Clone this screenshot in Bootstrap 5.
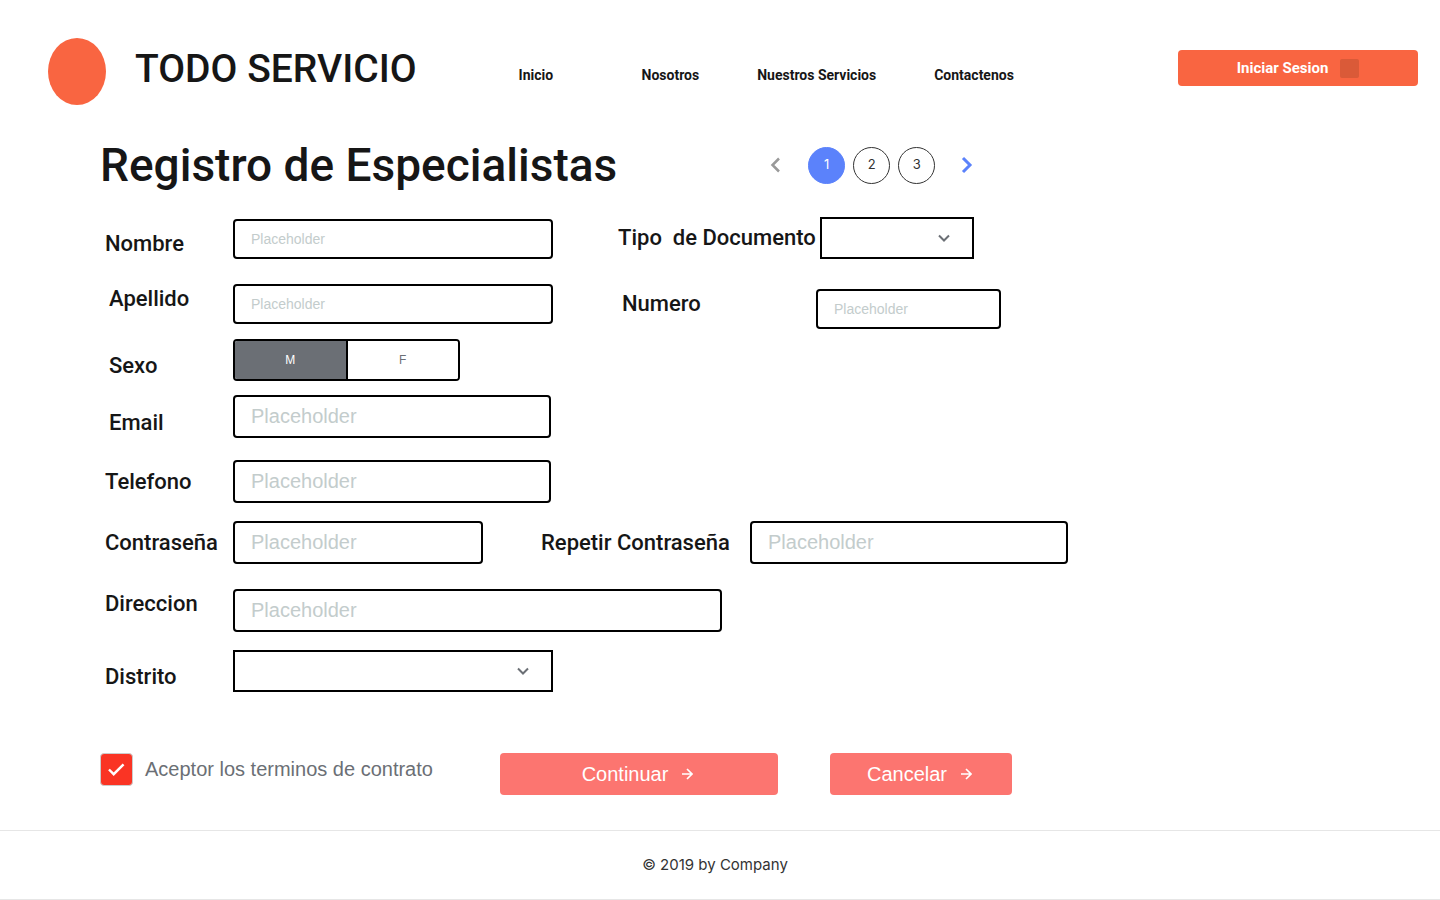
<!DOCTYPE html>
<html lang="es">
<head>
<meta charset="utf-8">
<meta name="viewport" content="width=device-width, initial-scale=1">
<title>Registro de Especialistas</title>
<link href="https://cdn.jsdelivr.net/npm/bootstrap@5.3.0/dist/css/bootstrap.min.css" rel="stylesheet">
<style>
  :root {
    --ink: #161616;
    --brand: #f96541;
    --action: #fc7570;
    --blue: #5b82fb;
    --grey: #6b6f75;
    --hint: #c3cccc;
  }
  body { font-family: Roboto, "Liberation Sans", sans-serif; color: var(--ink); background: #fff; }

  .site-header { min-height: 138px; padding: 4px 22px 0 48px; }
  .brand-name { font-size: 39px; font-weight: 500; line-height: 46px; margin-left: 29px; color: var(--ink); }
  .menu { margin-left: 102px; }
  .menu a { font-size: 14px; font-weight: 700; line-height: 20px; color: var(--ink); white-space: nowrap; text-decoration: none; }
  .menu li:first-child { width: 123px; }
  .menu li + li { margin-right: 58px; }
  .menu li:last-child { margin-right: 0; }
  .btn-login { width: 240px; height: 36px; margin-bottom: 6px; font-size: 15px; font-weight: 700; color: #fff; background: var(--brand); border: 0; border-radius: 4px; }
  .btn-login:hover { color: #fff; background: #e85a38; }
  .login-mark { width: 19px; height: 19px; border-radius: 2px; background: #da5a38; }

  .page-body { padding-left: 100px; padding-right: 22px; }
  .page-title { font-size: 46px; font-weight: 500; line-height: 54px; min-width: 517px; }
  .pager { margin-left: 135px; }
  .pager .page-link { width: 37px; height: 37px; padding: 0; border: 1px solid #333; border-radius: 50%; font-family: Inter, sans-serif; font-size: 13px; color: #333; background: #fff; }
  .pager .active .page-link { color: #fff; background: var(--blue); border-color: var(--blue); }
  .pager .page-link.arrow { border: 0; width: 20px; margin: 0 14px; }

  .form-area { padding: 25px 0 0 5px; }
  .field-label { flex: none; width: 128px; font-size: 22px; font-weight: 500; line-height: 30px; white-space: nowrap; }
  .label-wide { width: 198px; }
  .label-second { width: 209px; margin-left: 58px; }
  .side-fields { margin-left: 65px; }
  .line { display: flex; }
  .line-first { min-height: 42px; align-items: flex-end; }
  .form-area .form-control, .form-area .form-select { border: 2px solid #000; color: var(--ink); font-family: "Liberation Sans", Arial, sans-serif; }
  .form-area .form-control { height: 43px; padding: 0 16px; font-size: 20px; border-radius: 4px; }
  .form-area .form-control.compact { height: 40px; font-size: 14px; }
  .form-area .form-control::placeholder { color: var(--hint); opacity: 1; }
  .form-area .form-select {
    height: 42px; border-radius: 0; background-position: right 20px center; background-size: 16px 16px;
    background-image: url("data:image/svg+xml,%3Csvg xmlns='http://www.w3.org/2000/svg' viewBox='0 0 16 16'%3E%3Cpath d='M3 5.5l5 5 5-5' fill='none' stroke='%236b6f75' stroke-width='2'/%3E%3C/svg%3E");
  }
  .w-field { width: 320px; }
  .w-mid { width: 318px; }
  .w-short { width: 250px; }
  .w-long { width: 489px; }
  .w-small { width: 185px; }
  .w-select { width: 154px; }
  .gap-over-xs { margin-top: 10px; }
  .gap-over-sm { margin-top: 14px; }
  .gap-over-md { margin-top: 18px; }
  .gap-over-lg { margin-top: 22px; }
  .gap-over-xl { margin-top: 25px; }
  .gap-over-xxl { margin-top: 30px; }

  .sex-group { width: 227px; height: 42px; border: 2px solid #000; border-radius: 4px; overflow: hidden; }
  .sex-group .btn { flex: 1; display: flex; align-items: center; justify-content: center; padding: 0; border: 0; border-radius: 0; font-family: "Liberation Sans", Arial, sans-serif; font-size: 12px; color: var(--grey); background: #fff; }
  .sex-group .btn-check:checked + .btn { color: #fff; background: var(--grey); }
  .sex-group .btn + .btn-check + .btn { margin: 0; border-left: 2px solid #000; }

  .actions { padding-top: 61px; padding-bottom: 35px; font-family: "Liberation Sans", Arial, sans-serif; font-size: 20px; }
  .terms { width: 400px; }
  .terms .form-check-input {
    width: 33px; height: 33px; margin: 0; border: 1px solid #ccc; border-radius: 4px; background-color: #fff;
  }
  .terms .form-check-input:checked {
    background-color: #fa3424; background-size: 100% 100%;
    background-image: url("data:image/svg+xml,%3Csvg xmlns='http://www.w3.org/2000/svg' viewBox='0 0 33 33'%3E%3Cpath d='M8.500 16.500l5 5L24 11' fill='none' stroke='%23fff' stroke-width='2.600'/%3E%3C/svg%3E");
  }
  .terms label { color: var(--grey); line-height: 33px; margin-left: 12px; white-space: nowrap; }
  .btn-action { height: 42px; padding: 0 3px 0 0; gap: 14px; font-size: 20px; color: #fff; background: var(--action); border: 0; border-radius: 4px; }
  .btn-action:hover { color: #fff; background: #f0625d; }
  .w-continue { width: 278px; margin-right: 52px; }
  .w-cancel { width: 182px; }

  .site-footer { border-top: 1px solid #e6e6e6; border-bottom: 1px solid #e6e6e6; font-family: Inter, sans-serif; font-size: 15px; line-height: 24px; padding: 22px 10px 22px 0; color: #333; }
</style>
</head>
<body>

<header class="site-header navbar navbar-expand d-flex flex-wrap align-items-center">
  <a class="d-flex align-items-center text-decoration-none" href="#">
    <svg width="58" height="67" viewBox="0 0 58 67" aria-hidden="true"><ellipse cx="29" cy="33.500" rx="29" ry="33.500" fill="#f96541"/></svg>
    <span class="brand-name pb-1">TODO SERVICIO</span>
  </a>
  <nav aria-label="Principal">
    <ul class="menu navbar-nav flex-wrap pt-2">
      <li><a href="#">Inicio</a></li>
      <li><a href="#">Nosotros</a></li>
      <li><a href="#">Nuestros Servicios</a></li>
      <li><a href="#">Contactenos</a></li>
    </ul>
  </nav>
  <button type="button" class="btn btn-login ms-auto d-flex align-items-center justify-content-center gap-2 p-0">
    Iniciar Sesion <span class="login-mark ms-1"></span>
  </button>
</header>

<main>
  <form class="page-body">
    <div class="d-flex flex-wrap align-items-center">
      <h1 class="page-title mb-0">Registro de Especialistas</h1>
      <nav class="pager" aria-label="Pasos del registro">
        <ul class="pagination gap-2 mb-0 align-items-center">
          <li><a class="page-link arrow d-flex align-items-center justify-content-center" href="#" aria-label="Anterior">
            <svg width="12" height="16" viewBox="0 0 12 16"><path d="M9 1.500L2.500 8L9 14.500" fill="none" stroke="#999" stroke-width="2.500"/></svg></a></li>
          <li class="active"><a class="page-link d-flex align-items-center justify-content-center" href="#">1</a></li>
          <li><a class="page-link ms-0 d-flex align-items-center justify-content-center" href="#">2</a></li>
          <li><a class="page-link ms-0 d-flex align-items-center justify-content-center" href="#">3</a></li>
          <li><a class="page-link arrow d-flex align-items-center justify-content-center" href="#" aria-label="Siguiente">
            <svg width="12" height="18" viewBox="0 0 12 18"><path d="M2 2L9 9L2 16" fill="none" stroke="#5b82fb" stroke-width="3"/></svg></a></li>
        </ul>
      </nav>
    </div>

    <div class="form-area">
      <div class="d-flex flex-wrap">
        <div>
          <div class="line line-first">
            <label class="field-label" for="nombre">Nombre</label>
            <input id="nombre" class="form-control compact w-field" type="text" placeholder="Placeholder">
          </div>
          <div class="line gap-over-xl align-items-start">
            <label class="field-label ps-1" for="apellido">Apellido</label>
            <input id="apellido" class="form-control compact w-field" type="text" placeholder="Placeholder">
          </div>
        </div>
        <div class="side-fields">
          <div class="line align-items-center">
            <label class="field-label label-wide" for="tipo">Tipo&nbsp; de Documento</label>
            <select id="tipo" class="form-select w-select ms-1"><option></option><option>DNI</option><option>Pasaporte</option></select>
          </div>
          <div class="line gap-over-xxl align-items-start">
            <label class="field-label label-wide ps-1" for="numero">Numero</label>
            <input id="numero" class="form-control compact w-small" type="text" placeholder="Placeholder">
          </div>
        </div>
      </div>

      <div class="line gap-over-xs align-items-end">
        <span class="field-label ps-1" id="sexo">Sexo</span>
        <div class="sex-group d-flex" role="group" aria-labelledby="sexo">
          <input type="radio" class="btn-check" name="sexo" id="sexo-m" checked>
          <label class="btn" for="sexo-m">M</label>
          <input type="radio" class="btn-check" name="sexo" id="sexo-f">
          <label class="btn" for="sexo-f">F</label>
        </div>
      </div>
      <div class="line gap-over-sm align-items-end">
        <label class="field-label ps-1" for="email">Email</label>
        <input id="email" class="form-control w-mid" type="email" placeholder="Placeholder">
      </div>
      <div class="line gap-over-lg align-items-center">
        <label class="field-label" for="telefono">Telefono</label>
        <input id="telefono" class="form-control w-mid" type="tel" placeholder="Placeholder">
      </div>
      <div class="line gap-over-md align-items-center flex-wrap">
        <label class="field-label" for="clave">Contraseña</label>
        <input id="clave" class="form-control w-short" type="password" placeholder="Placeholder">
        <label class="field-label label-second" for="clave2">Repetir Contraseña</label>
        <input id="clave2" class="form-control w-mid" type="password" placeholder="Placeholder">
      </div>
      <div class="line gap-over-xl align-items-start">
        <label class="field-label" for="direccion">Direccion</label>
        <input id="direccion" class="form-control w-long" type="text" placeholder="Placeholder">
      </div>
      <div class="line gap-over-md align-items-end">
        <label class="field-label" for="distrito">Distrito</label>
        <select id="distrito" class="form-select w-field"><option></option><option>Miraflores</option><option>San Isidro</option></select>
      </div>
    </div>

    <div class="actions d-flex flex-wrap align-items-start">
      <div class="terms d-flex">
        <input class="form-check-input" type="checkbox" id="terminos" checked>
        <label for="terminos">Aceptor los terminos de contrato</label>
      </div>
      <button type="submit" class="btn btn-action w-continue d-flex align-items-center justify-content-center">
        Continuar
        <svg width="11" height="12" viewBox="0 0 11 12" aria-hidden="true"><path d="M0 6h10M5 1l5 5-5 5" fill="none" stroke="#fff" stroke-width="1.600"/></svg>
      </button>
      <button type="button" class="btn btn-action w-cancel d-flex align-items-center justify-content-center">
        Cancelar
        <svg width="11" height="12" viewBox="0 0 11 12" aria-hidden="true"><path d="M0 6h10M5 1l5 5-5 5" fill="none" stroke="#fff" stroke-width="1.600"/></svg>
      </button>
    </div>
  </form>
</main>

<footer class="site-footer text-center">© 2019 by Company</footer>

<script src="https://cdn.jsdelivr.net/npm/bootstrap@5.3.0/dist/js/bootstrap.bundle.min.js"></script>
</body>
</html>
